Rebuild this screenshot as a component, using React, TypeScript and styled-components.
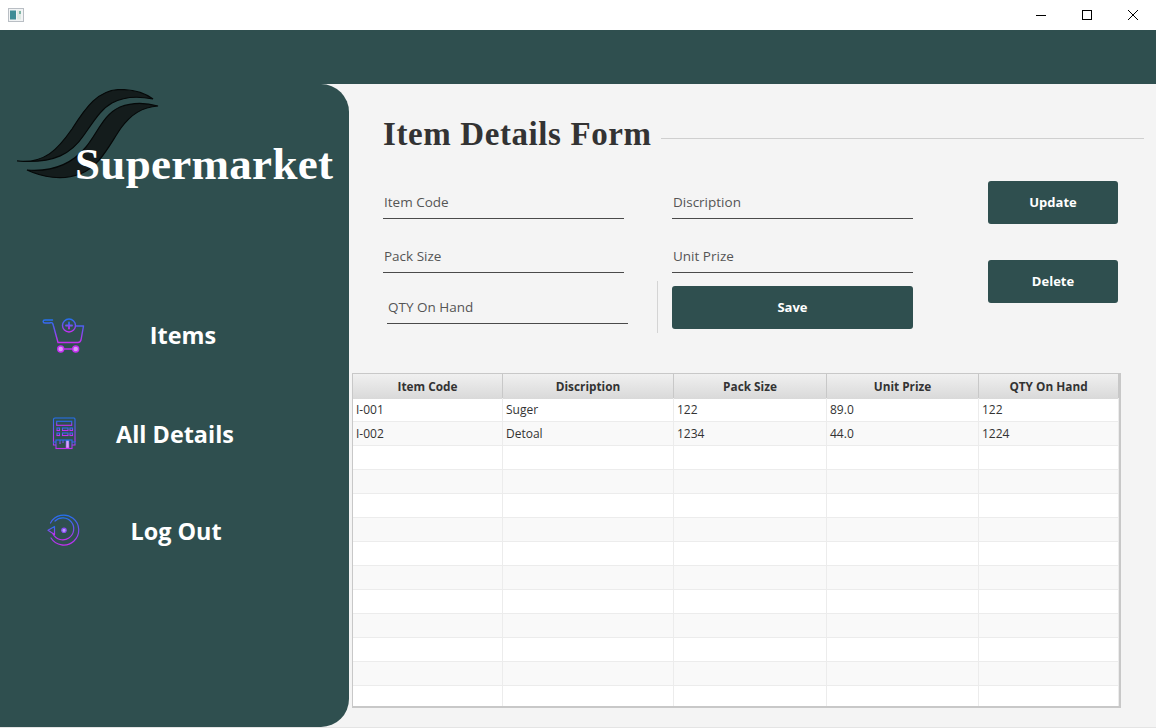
import React from "react";
import styled, { createGlobalStyle } from "styled-components";

const GlobalStyle = createGlobalStyle`
  html, body {
    margin: 0;
    padding: 0;
    background: #f4f4f4;
  }
  * {
    box-sizing: border-box;
  }
`;

const Window = styled.div`
  width: 1156px;
  height: 728px;
  display: flex;
  flex-direction: column;
  overflow: hidden;
  font-family: "Open Sans", "Liberation Sans", sans-serif;
`;

const TitleBar = styled.div`
  height: 30px;
  flex: none;
  background: #ffffff;
  display: flex;
  align-items: center;
  justify-content: space-between;
  padding-left: 8px;
`;

const WindowControls = styled.div`
  display: flex;
  height: 100%;
`;

const ControlButton = styled.div`
  width: 46px;
  height: 30px;
  display: flex;
  align-items: center;
  justify-content: center;
`;

const HeaderBand = styled.div`
  height: 54px;
  flex: none;
  background: #2f4f4f;
`;

const Body = styled.div`
  flex: 1;
  display: flex;
  background: #f4f4f4;
  border-bottom: 1px solid #e4e4e4;
`;

const Sidebar = styled.aside`
  width: 349px;
  flex: none;
  background: #2f4f4f;
  border-radius: 0 28px 28px 0;
  display: flex;
  flex-direction: column;
`;

const Brand = styled.div`
  height: 110px;
  padding: 5px 0 0 17px;
  position: relative;
`;

const BrandName = styled.div`
  position: absolute;
  left: 75px;
  top: 53px;
  font-family: "Liberation Serif", serif;
  font-weight: 700;
  font-size: 45px;
  letter-spacing: 0.3px;
  line-height: 54px;
  color: #ffffff;
  white-space: nowrap;
`;

const Nav = styled.nav`
  display: flex;
  flex-direction: column;
  margin-top: 90px;
`;

const NavRow = styled.div<{ $height: number; $iconLeft: number; $labelCenter: number }>`
  height: ${(p) => p.$height}px;
  position: relative;
  display: flex;
  align-items: center;
  padding-left: ${(p) => p.$iconLeft}px;

  & > span {
    position: absolute;
    left: ${(p) => p.$labelCenter}px;
    transform: translateX(-50%);
  }
`;

const NavLabel = styled.span`
  font-weight: 700;
  font-size: 23.4px;
  line-height: 32px;
  color: #ffffff;
  white-space: nowrap;
`;

const Main = styled.main`
  flex: 1;
  display: flex;
  flex-direction: column;
`;

const TitleRow = styled.div`
  height: 104px;
  display: flex;
  align-items: flex-start;
  padding: 30px 12px 0 34px;
`;

const Title = styled.h1`
  margin: 0;
  font-family: "Liberation Serif", serif;
  font-weight: 700;
  font-size: 33px;
  letter-spacing: 0.6px;
  line-height: 40px;
  color: #333333;
  white-space: nowrap;
`;

const TitleRule = styled.div`
  flex: 1;
  height: 1px;
  margin: 24px 0 0 9px;
  background: #cfcfcf;
`;

const FormArea = styled.div`
  display: flex;
  padding-left: 34px;
`;

const FieldColumns = styled.div`
  width: 530px;
  display: flex;
  flex-direction: column;
`;

const FieldRow = styled.div<{ $top: number }>`
  display: flex;
  gap: 48px;
  margin-top: ${(p) => p.$top}px;
`;

const Field = styled.div`
  width: 241px;
  height: 31px;
  border-bottom: 1px solid #4a4a4a;
  padding-left: 1px;
  font-size: 13.5px;
  line-height: 28px;
  color: #555555;
`;

const LastRow = styled.div`
  display: flex;
  align-items: flex-start;
  height: 52px;
  margin-top: 8px;
`;

const QtyField = styled(Field)`
  margin: 12px 0 0 4px;
`;

const Separator = styled.div`
  width: 1px;
  height: 52px;
  margin: 0 14px 0 29px;
  background: #d4d4d4;
`;

const ActionButton = styled.button<{ $wide?: boolean }>`
  width: ${(p) => (p.$wide ? 241 : 130)}px;
  height: 43px;
  padding: 0 0 2px;
  border: 0;
  border-radius: 3px;
  background: #2f4f4f;
  color: #ffffff;
  font-family: "Open Sans", "Liberation Sans", sans-serif;
  font-weight: 700;
  font-size: 13px;
`;

const SaveButton = styled(ActionButton)`
  margin-top: 5px;
`;

const ButtonColumn = styled.div`
  display: flex;
  flex-direction: column;
  gap: 36px;
  margin: -7px 0 0 75px;
`;

const TableFrame = styled.div`
  width: 769px;
  height: 335px;
  margin: 40px 0 0 3px;
  border: 1px solid #c8c8c8;
  border-width: 1px 2px 2px 1px;
  overflow: hidden;
  background: #ffffff;
`;

const columns = "150px 171px 153px 152px 140px 1fr";

const HeaderRow = styled.div`
  display: grid;
  grid-template-columns: ${columns};
  height: 24px;
  border-bottom: 1px solid #c8c8c8;
`;

const HeaderCell = styled.div`
  background: linear-gradient(#f0f0f0, #d9d9d9);
  border-right: 1px solid #c8c8c8;
  font-weight: 700;
  font-size: 11.8px;
  line-height: 25px;
  text-align: center;
  color: #333333;
`;

const Row = styled.div<{ $odd: boolean }>`
  display: grid;
  grid-template-columns: ${columns};
  height: 24px;
  background: ${(p) => (p.$odd ? "#f9f9f9" : "#ffffff")};
  border-bottom: 1px solid #ececec;
`;

const Cell = styled.div`
  border-right: 1px solid #ececec;
  padding-left: 3px;
  font-size: 12px;
  line-height: 23px;
  color: #333333;
`;

const headers = ["Item Code", "Discription", "Pack Size", "Unit Prize", "QTY On Hand", ""];

const items = [
  ["I-001", "Suger", "122", "89.0", "122", ""],
  ["I-002", "Detoal", "1234", "44.0", "1224", ""],
];

const rows: string[][] = Array.from({ length: 13 }, (_, i) => items[i] ?? ["", "", "", "", "", ""]);

const Gradient = ({ id }: { id: string }) => (
  <defs>
    <linearGradient id={id} x1="0" y1="0" x2="0" y2="1">
      <stop offset="0" stopColor="#2470f0" />
      <stop offset="1" stopColor="#c42ff0" />
    </linearGradient>
  </defs>
);

const AppIcon = () => (
  <svg width="16" height="14" viewBox="0 0 16 14">
    <rect x="0.5" y="0.5" width="15" height="13" fill="#f2f4f5" stroke="#b9bec4" />
    <rect x="2" y="2.5" width="6" height="9" fill="#3f8d96" />
    <rect x="9" y="2.5" width="4" height="9" fill="#dfeae4" />
    <rect x="11" y="3" width="2" height="3" fill="#7fb5a5" />
  </svg>
);

const Logo = () => (
  <svg width="150" height="95" viewBox="17 90 150 95">
    <path
      d="M17 162 C45 165 58 150 72 130 C86 108 98 91 120 90.500 C133 90.500 145 94 153 100 C138 97 123 98 112 104 C101 110 94 122 84 136 C72 154 55 165 17 162 Z"
      fill="#141c1c"
      stroke="#050808"
      strokeWidth="1.200"
    />
    <path
      d="M27 171 C52 173 72 165 86 148 C98 133 104 115 120 108 C133 103 147 104 158 107 C142 108 131 115 121 129 C108 148 100 167 80 175 C62 182 42 178 27 171 Z"
      fill="#141c1c"
      stroke="#050808"
      strokeWidth="1.200"
    />
  </svg>
);

const CartIcon = () => (
  <svg width="46" height="40" viewBox="0 0 46 40" fill="none" stroke="url(#cartGrad)" strokeWidth="1.4" strokeLinecap="round" strokeLinejoin="round">
    <Gradient id="cartGrad" />
    <path d="M12.500 5 H5 C2.500 5 2.500 8 5 8 H9 C11 8 12.500 6 13.500 11 L18 27.500 H38 C39.500 27.500 40.500 26.500 41 25 L43.500 11 H36" />
    <path d="M13.500 10.500 H22.500" />
    <circle cx="29" cy="10.500" r="6.500" />
    <path d="M29 7.500 V13.500 M26 10.500 H32" strokeWidth="1.800" />
    <path d="M22 22.500 H35" />
    <path d="M21 34 H36" stroke="#c42ff0" strokeWidth="1.500" />
    <circle cx="20.700" cy="34" r="3" fill="#d99af5" stroke="#c42ff0" />
    <circle cx="35.700" cy="34" r="3" fill="#d99af5" stroke="#c42ff0" />
  </svg>
);

const TerminalIcon = () => (
  <svg width="34" height="36" viewBox="0 0 34 36" fill="none" stroke="url(#termGrad)" strokeWidth="1.100">
    <Gradient id="termGrad" />
    <path d="M5.500 26 V3.500 C5.500 2.500 6 2 7 2 H26 C27 2 27 2.500 27 3.500 V26" />
    <rect x="8.700" y="5.300" width="15" height="4" />
    <rect x="9" y="12" width="2.500" height="2.500" />
    <rect x="14.500" y="12" width="5.500" height="2.500" />
    <rect x="22" y="12" width="2.500" height="2.500" />
    <rect x="9" y="17" width="2.500" height="2.500" />
    <rect x="14.500" y="17" width="5.500" height="2.500" />
    <rect x="22" y="17" width="2.500" height="2.500" />
    <path d="M9 21.500 H23.500" />
    <path d="M29 4.500 V27" strokeWidth="1.300" />
    <path d="M8 26 H5.500 V29 H8 M24 26 H27 V29 H24" />
    <rect x="8" y="24" width="16" height="8.500" />
    <path d="M12 24 V28 M15 24 V27" />
    <rect x="18" y="24.500" width="3" height="7.500" fill="#d9a5f7" strokeWidth="0.600" />
  </svg>
);

const LogoutIcon = () => (
  <svg width="38" height="36" viewBox="0 0 38 36" fill="none" stroke="url(#outGrad)" strokeWidth="1.200" strokeLinecap="round" strokeLinejoin="round">
    <Gradient id="outGrad" />
    <path d="M5.500 10 A15 15 0 1 1 6 25" />
    <path d="M10 8 A11 11 0 1 1 8 21" />
    <path d="M3 17.300 L9.500 13.500 V21.500 Z" />
    <path d="M9.500 17.300 H19" />
    <circle cx="19" cy="17.300" r="2.200" fill="#b9a0fa" stroke="#8a4cf2" />
  </svg>
);

const MinimizeGlyph = () => (
  <svg width="12" height="12" viewBox="0 0 12 12">
    <path d="M1 6.500 H11" stroke="#000" strokeWidth="1" />
  </svg>
);

const MaximizeGlyph = () => (
  <svg width="12" height="12" viewBox="0 0 12 12">
    <rect x="1.500" y="1.500" width="9" height="9" fill="none" stroke="#000" strokeWidth="1" />
  </svg>
);

const CloseGlyph = () => (
  <svg width="12" height="12" viewBox="0 0 12 12">
    <path d="M1 1 L11 11 M11 1 L1 11" stroke="#000" strokeWidth="1" />
  </svg>
);

export default function App() {
  return (
    <Window>
      <GlobalStyle />
      <TitleBar>
        <AppIcon />
        <WindowControls>
          <ControlButton><MinimizeGlyph /></ControlButton>
          <ControlButton><MaximizeGlyph /></ControlButton>
          <ControlButton><CloseGlyph /></ControlButton>
        </WindowControls>
      </TitleBar>
      <HeaderBand />
      <Body>
        <Sidebar>
          <Brand>
            <Logo />
            <BrandName>Supermarket</BrandName>
          </Brand>
          <Nav>
            <NavRow $height={101} $iconLeft={40} $labelCenter={183}>
              <CartIcon />
              <NavLabel>Items</NavLabel>
            </NavRow>
            <NavRow $height={98} $iconLeft={48} $labelCenter={175}>
              <TerminalIcon />
              <NavLabel>All Details</NavLabel>
            </NavRow>
            <NavRow $height={96} $iconLeft={45} $labelCenter={176}>
              <LogoutIcon />
              <NavLabel>Log Out</NavLabel>
            </NavRow>
          </Nav>
        </Sidebar>
        <Main>
          <TitleRow>
            <Title>Item Details Form</Title>
            <TitleRule />
          </TitleRow>
          <FormArea>
            <FieldColumns>
              <FieldRow $top={0}>
                <Field>Item Code</Field>
                <Field>Discription</Field>
              </FieldRow>
              <FieldRow $top={23}>
                <Field>Pack Size</Field>
                <Field>Unit Prize</Field>
              </FieldRow>
              <LastRow>
                <QtyField>QTY On Hand</QtyField>
                <Separator />
                <SaveButton $wide>Save</SaveButton>
              </LastRow>
            </FieldColumns>
            <ButtonColumn>
              <ActionButton>Update</ActionButton>
              <ActionButton>Delete</ActionButton>
            </ButtonColumn>
          </FormArea>
          <TableFrame>
            <HeaderRow>
              {headers.map((h, i) => (
                <HeaderCell key={i}>{h}</HeaderCell>
              ))}
            </HeaderRow>
            {rows.map((row, r) => (
              <Row key={r} $odd={r % 2 === 1}>
                {row.map((c, i) => (
                  <Cell key={i}>{c}</Cell>
                ))}
              </Row>
            ))}
          </TableFrame>
        </Main>
      </Body>
    </Window>
  );
}
